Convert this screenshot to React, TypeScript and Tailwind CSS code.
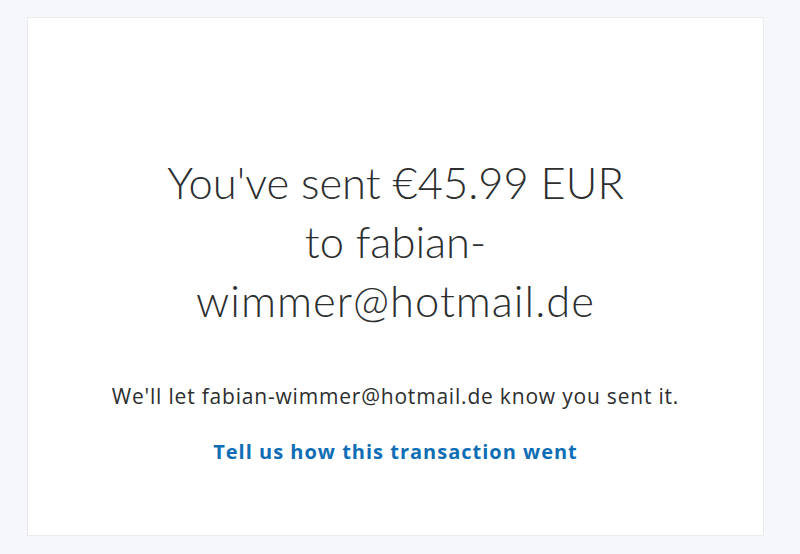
export default function App() {
  return (
    <div className="w-[800px] h-[554px] bg-[#f5f7fa] pt-[17px] pl-[27px]" style={{ fontFamily: "'Open Sans', 'Noto Sans', sans-serif" }}>
      <div className="w-[737px] h-[519px] bg-white border border-[#e9ebee] flex flex-col items-center">
        <div className="mt-[135px] flex flex-col items-center text-[43.5px] leading-[59px] font-light text-[#2c2e2f]" style={{ fontFamily: "Lato, sans-serif" }}>
          <span>You've sent €45.99 EUR</span>
          <span>to fabian-</span>
          <span className="tracking-[1px]">wimmer@hotmail.de</span>
        </div>
        <p className="mt-[52px] text-[21px] leading-[28px] tracking-[0.8px] text-[#2c2e2f]">
          We'll let fabian-wimmer@hotmail.de know you sent it.
        </p>
        <a className="mt-[28px] text-[20px] leading-[28px] font-bold tracking-[1px] text-[#0e6eb5]">
          Tell us how this transaction went
        </a>
      </div>
    </div>
  );
}
